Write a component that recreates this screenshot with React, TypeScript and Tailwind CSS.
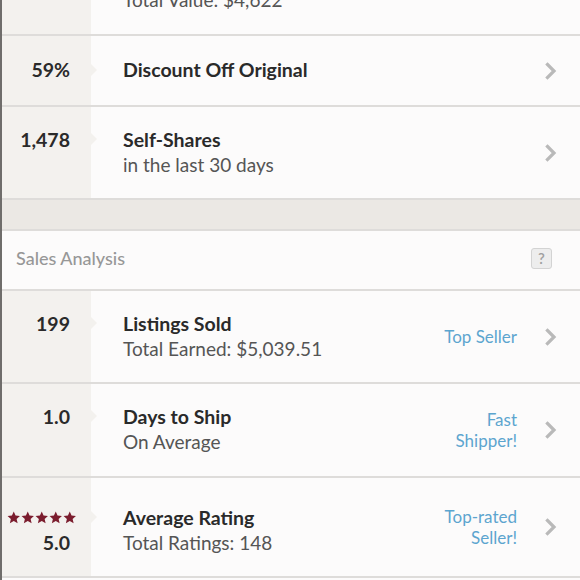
import { ReactNode } from 'react'

interface StatRow {
  value?: string
  stars?: boolean
  title: string
  subtitle?: string
  badge?: string[]
  height: string
  extra?: string
}

const topRows: StatRow[] = [
  { value: '$4,622', title: 'Closet Value', subtitle: 'Total Value: $4,622', height: 'h-[94px]', extra: 'mt-[-58px]' },
  { value: '59%', title: 'Discount Off Original', height: 'h-[71px]' },
  { value: '1,478', title: 'Self-Shares', subtitle: 'in the last 30 days', height: 'h-[93px]' },
]

const salesRows: StatRow[] = [
  { value: '199', title: 'Listings Sold', subtitle: 'Total Earned: $5,039.51', badge: ['Top Seller'], height: 'h-[93px]' },
  { value: '1.0', title: 'Days to Ship', subtitle: 'On Average', badge: ['Fast', 'Shipper!'], height: 'h-[94px]' },
  { stars: true, value: '5.0', title: 'Average Rating', subtitle: 'Total Ratings: 148', badge: ['Top-rated', 'Seller!'], height: 'h-[100px]' },
]

function Star() {
  return (
    <svg viewBox="0 0 24 24" className="w-[13.5px] h-[13.5px]" fill="#7b1d2e">
      <path d="M12 1l3.2 7.1 7.8.8-5.9 5.2 1.8 7.7L12 17.8l-6.9 4 1.8-7.7L1 8.9l7.8-.8z" />
    </svg>
  )
}

function Chevron() {
  return (
    <svg viewBox="0 0 12 18" className="w-[12px] h-[18px]" fill="none" stroke="#b9b9b9" strokeWidth="3.2" strokeLinecap="square">
      <path d="M2.5 2.5l6.5 6.5-6.5 6.5" />
    </svg>
  )
}

function Row({ row }: { row: StatRow }) {
  const left: ReactNode[] = []
  if (row.stars) {
    left.push(
      <div key="s" className="flex gap-[0.5px] h-[25px] items-center pl-[5px] self-start">
        <Star /><Star /><Star /><Star /><Star />
      </div>
    )
  }
  left.push(
    <div key="v" className="h-[25px] leading-[25px] font-bold text-[19.5px] text-[#2a2a2a] self-end">
      {row.value}
    </div>
  )
  if (row.subtitle && !row.stars) left.push(<div key="sp" className="h-[25px]" />)

  // rating row text sits a little lower than the row centre
  const shift = row.stars ? 'pt-[6px]' : 'pb-[2px]'

  return (
    <div className={`flex border-b-2 border-[#dedcda] ${row.height} ${row.extra ?? ''}`}>
      <div className={`relative w-[89px] shrink-0 bg-[#f3f1ee] flex flex-col justify-center pr-[21px] ${shift}`}>
        {left}
        <div className={`absolute right-[-6px] w-0 h-0 border-y-[6px] border-y-transparent border-l-[6px] border-l-[#f3f1ee] ${row.subtitle ? (row.stars ? 'top-[calc(50%-16px)]' : 'top-[calc(50%-20px)]') : 'top-[calc(50%-7px)]'}`} />
      </div>
      <div className="flex-1 flex items-center pl-[32px] pr-[23px] bg-[#fcfbfb]">
        <div className={`flex-1 flex flex-col ${shift}`}>
          <div className="h-[25px] leading-[25px] font-bold text-[19.5px] text-[#2a2a2a]">{row.title}</div>
          {row.subtitle && (
            <div className="h-[25px] leading-[25px] text-[19px] text-[#555]">{row.subtitle}</div>
          )}
        </div>
        {row.badge && (
          <div className="text-right text-[17px] leading-[21px] text-[#5ca5cf] mr-[28px]">
            {row.badge.map(b => <div key={b}>{b}</div>)}
          </div>
        )}
        <Chevron />
      </div>
    </div>
  )
}

export default function App() {
  return (
    <div className="w-[580px] h-[580px] overflow-hidden bg-[#fcfbfb] border-l-2 border-[#6f6d6b]" style={{ fontFamily: 'Lato, "Open Sans", sans-serif' }}>
      {topRows.map(r => <Row key={r.title} row={r} />)}

      {/* textured divider band */}
      <div className="h-[31px] bg-[#ebe8e4] border-b-2 border-[#dedcda]" />

      {/* Sales Analysis header */}
      <div className="h-[60px] flex items-center justify-between pl-[14px] pr-[28px] pb-[3px] border-b-2 border-[#dedcda] bg-[#fcfbfb]">
        <span className="text-[18px] text-[#979797] font-medium">Sales Analysis</span>
        <span className="w-[21px] h-[21px] flex items-center justify-center rounded-[3px] bg-[#ededed] border border-[#d3d3d3] text-[15px] font-semibold text-[#a0a0a0]">?</span>
      </div>

      {salesRows.map(r => <Row key={r.title} row={r} />)}
    </div>
  )
}
